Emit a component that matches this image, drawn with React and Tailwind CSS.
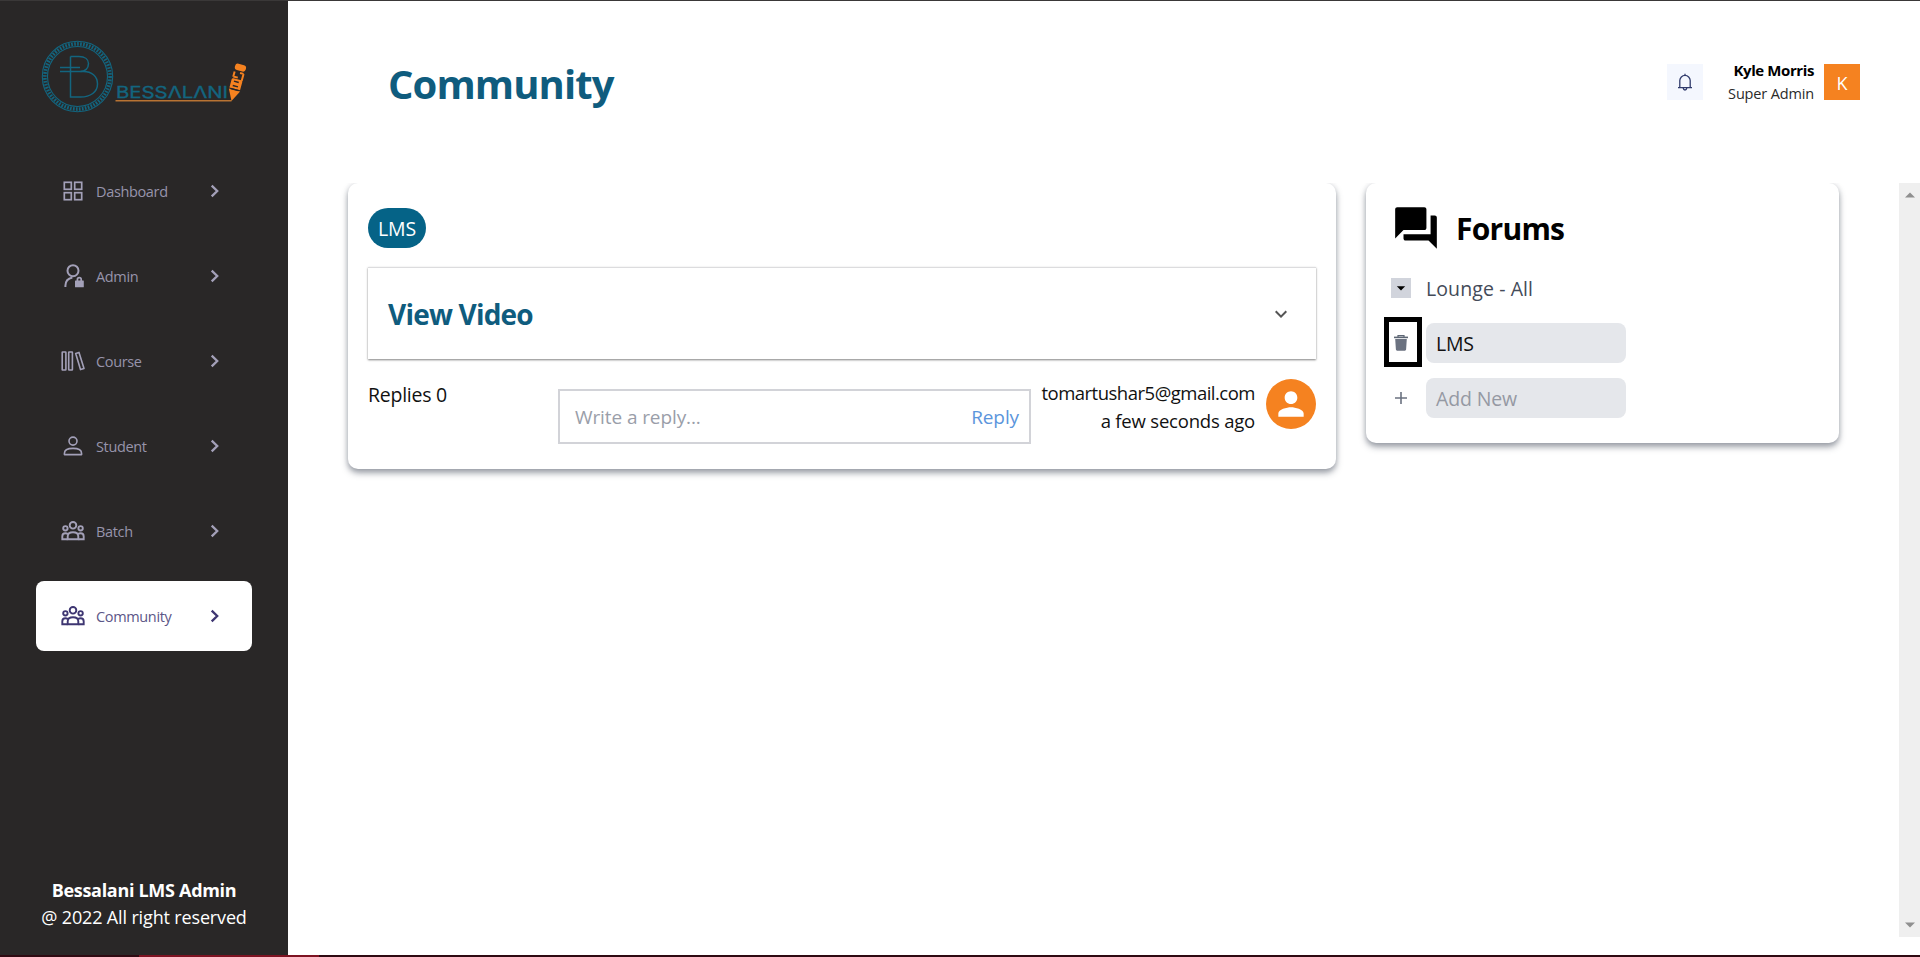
import React from "react";
import { MdForum, MdArrowDropDown, MdExpandMore, MdPerson } from "react-icons/md";

const iconProps = { fill: "none", stroke: "currentColor", strokeWidth: 1.7, width: 24, height: 24, viewBox: "0 0 24 24" };

function GridIcon() {
  return (
    <svg {...iconProps}>
      <rect x="3.300" y="3.300" width="7" height="7" />
      <rect x="13.700" y="3.300" width="7" height="7" />
      <rect x="3.300" y="13.700" width="7" height="7" />
      <rect x="13.700" y="13.700" width="7" height="7" />
    </svg>
  );
}

function AdminIcon() {
  return (
    <svg {...iconProps} strokeWidth="2">
      <circle cx="12" cy="6.700" r="5.500" />
      <path d="M4.400 23v-1.200c0-4.300 2.800-7.600 7-8.400" />
      <path d="M16.400 17v-1.500a1.900 1.900 0 0 1 3.800 0V17" strokeWidth="1.700" />
      <rect x="14" y="16.500" width="8.800" height="6.700" rx=".5" fill="currentColor" stroke="none" />
    </svg>
  );
}

function BooksIcon() {
  return (
    <svg {...iconProps} strokeWidth="1.600">
      <rect x="1.200" y="3" width="3.700" height="18" rx=".4" />
      <rect x="7.700" y="3" width="3.700" height="18" rx=".4" />
      <path d="M14.700 4.400 18 3.400l5 16.100-3.500 1.100z" strokeLinejoin="round" />
    </svg>
  );
}

function StudentIcon() {
  return (
    <svg {...iconProps} strokeWidth="1.600">
      <circle cx="12" cy="7.100" r="4" />
      <path d="M3.400 20.600v-1.200c0-3.200 3.700-5 8.600-5s8.600 1.800 8.600 5v1.200z" strokeLinejoin="round" />
    </svg>
  );
}

function GroupIcon() {
  return (
    <svg {...iconProps} strokeWidth="1.900">
      <circle cx="12" cy="6.300" r="3.300" />
      <circle cx="4.400" cy="9.300" r="2.200" />
      <circle cx="19.600" cy="9.300" r="2.200" />
      <path d="M6.700 20.200v-2.700c0-2.500 1.900-4.200 5.300-4.200s5.300 1.700 5.300 4.200v2.700z" />
      <path d="M6.500 20.200H1.300v-2.700c0-2 1.200-3.200 3.100-3.200 1 0 1.800.2 2.500.7M17.500 20.200h5.200v-2.700c0-2-1.200-3.200-3.100-3.200-1 0-1.800.2-2.500.7" />
    </svg>
  );
}

function Chevron() {
  return (
    <svg width="10" height="14" viewBox="0 0 10 14" fill="none" stroke="currentColor" strokeWidth="2.300">
      <path d="m1.700 1.700 5.500 5.300-5.500 5.300" />
    </svg>
  );
}

function TrashIcon() {
  return (
    <svg width="16" height="18" viewBox="0 0 16 18" fill="none">
      <path d="M5 3V1.600h6V3" stroke="#5d6674" strokeWidth="1.200" />
      <path d="M1 3.400h14" stroke="#5d6674" strokeWidth="1.600" />
      <path d="M2.200 5h11.600l-.7 10.600a1.200 1.200 0 0 1-1.200 1.100H4.100a1.200 1.200 0 0 1-1.200-1.100z" fill="#6b7280" />
    </svg>
  );
}

function PlusIcon() {
  return (
    <svg width="14" height="14" viewBox="0 0 14 14" stroke="#6b7280" strokeWidth="1.600">
      <path d="M7 1v12M1 7h12" />
    </svg>
  );
}

function Logo() {
  return (
    <svg width="208" height="76" viewBox="0 0 208 76" fill="none">
      <g stroke="#13657f">
        <circle cx="36.500" cy="36.500" r="35.200" strokeWidth="1.100" />
        <circle cx="36.500" cy="36.500" r="32.600" strokeWidth="3.600" strokeDasharray="1.700 1.300" />
        <circle cx="36.500" cy="36.500" r="30" strokeWidth="1.100" />
        <g strokeWidth="1.500">
          <path d="M29.500 16.500v40.500h10c10 0 17-5 17-13s-6-12.500-14-12.500H19" />
          <path d="M29.500 16.500h8.500c6 0 9.500 3 9.500 7 0 5-3.500 8-8 8M19 27.500h20" />
        </g>
      </g>
      <text x="75" y="58" fill="#13657f" stroke="#13657f" strokeWidth=".35" fontFamily="Inter, sans-serif" fontSize="16.500" textLength="112" lengthAdjust="spacingAndGlyphs">BESSΛLΛNI</text>
      <path d="M74.500 60.800h116" stroke="#b87333" strokeWidth="1.500" />
      <g transform="translate(190.500 61) rotate(15)">
        <path d="M-5.800-11.500h11.600L0 0z" fill="#f58220" />
        <path d="M-5.500-12.500h11v-8.500q0-1.500-1.500-1.500h-8q-1.500 0-1.500 1.500z" fill="#f58220" />
        <path d="M-2.800-19.800h5M-2.800-15.300h5.400M-4-11.800h8" stroke="#292727" strokeWidth="1.500" />
        <path d="M-4.600-23.800v-5.500M-4.600-24.200H0M4.600-22v-7.300M1-29.300h3.600" stroke="#f58220" strokeWidth="2" />
        <rect x="-5.600" y="-37.800" width="11.200" height="6.500" rx="2.800" fill="#f58220" />
      </g>
    </svg>
  );
}

const navItems = [
  { label: "Dashboard", Icon: GridIcon },
  { label: "Admin", Icon: AdminIcon },
  { label: "Course", Icon: BooksIcon },
  { label: "Student", Icon: StudentIcon },
  { label: "Batch", Icon: GroupIcon },
  { label: "Community", Icon: GroupIcon, active: true },
];

function NavItem({ label, Icon, active }) {
  return (
    <a
      className={
        "flex h-[70px] items-center rounded-lg pl-[25px] pr-8 " +
        (active ? "bg-white text-[#3e3672]" : "text-[#a3a0b8]")
      }
    >
      <Icon />
      <span className={"ml-[11px] flex-1 pt-px text-[14.5px] leading-6 tracking-[-0.35px] " + (active ? "text-[#5c5687]" : "text-[#9794ab]")}>{label}</span>
      <Chevron />
    </a>
  );
}

function Sidebar() {
  return (
    <aside className="flex w-72 shrink-0 flex-col bg-[#292727] px-9">
      <div className="-mx-9 h-[155px] pl-[41px] pt-[39px]">
        <Logo />
      </div>
      <nav className="flex flex-col gap-[15px]">
        {navItems.map((item) => (
          <NavItem key={item.label} {...item} />
        ))}
      </nav>
      <div className="-mx-9 mb-[24px] mt-auto text-center text-[18px] leading-[27px] text-white">
        <p className="font-bold tracking-[-0.3px]">Bessalani LMS Admin</p>
        <p className="tracking-[-0.15px]">@ 2022 All right reserved</p>
      </div>
    </aside>
  );
}

function Header() {
  return (
    <header className="flex h-[182px] shrink-0 items-start justify-between pl-[100px] pr-[60px]">
      <h1 className="mt-[53px] text-[40px] font-bold leading-[60px] tracking-[-0.9px] text-[#0f5c7e]">Community</h1>
      <div className="mt-[63px] flex h-9">
        <div className="flex size-9 items-center justify-center bg-[#f4f7fe] text-[#2f3a6b]">
          <svg width="16" height="18" viewBox="0 0 16 18" fill="none" stroke="currentColor" strokeWidth="1.300">
            <path d="M1 14.700h14M2.800 14.500V7.600a5.200 5.200 0 0 1 10.400 0v6.900M8 2.300V.8M6.200 15.200c.2 1.200.8 1.800 1.800 1.800s1.600-.6 1.800-1.800" />
          </svg>
        </div>
        <div className="-mt-[5px] ml-6 mr-[10px] w-[87px] whitespace-nowrap text-right text-[15px] leading-[23px] text-black">
          <p className="font-bold tracking-[-0.4px]">Kyle Morris</p>
          <p className="text-[14.500px] tracking-[-0.15px] text-[#2a2a2a]">Super Admin</p>
        </div>
        <div className="flex size-9 items-center justify-center bg-[#f58220] pt-0.5 text-[18px] text-white">K</div>
      </div>
    </header>
  );
}

const cardClass = "rounded-[10px] bg-white shadow-[0_4px_6px_rgba(60,68,84,0.5),0_0_5px_rgba(60,68,84,0.12)]";

function PostCard() {
  return (
    <section className={cardClass + " h-[286px] w-[988px] px-5 pt-[25px]"}>
      <span className="flex h-10 w-[58px] items-center justify-center rounded-[20px] bg-[#056387] pt-0.5 text-[19.5px] tracking-[-0.1px] text-white">LMS</span>
      <div className="mt-[19px] flex h-[92px] items-center justify-between border-t border-[#dcdcde] bg-white pl-[20px] pr-[23px] shadow-[0_1px_2px_rgba(0,0,0,0.5)]">
        <h2 className="text-[28px] font-bold tracking-[-0.8px] text-[#0f5c7e]">View Video</h2>
        <MdExpandMore className="size-6 text-[#555]" />
      </div>
      <div className="flex">
        <p className="mt-[22px] w-[190px] text-[19.5px] leading-[28px] tracking-[-0.25px] text-[#111]">Replies 0</p>
        <div className="mt-[30px] flex h-[55px] w-[473px] shrink-0 items-center justify-between border-2 border-[#d2d3d8] pl-[15px] pr-[10px] pt-[2px] text-[19px]">
          <span className="tracking-[-0.1px] text-[#9a9ea9]">Write a reply...</span>
          <span className="tracking-[-0.1px] text-[#5b95dc]">Reply</span>
        </div>
        <div className="mt-5 w-[224px] whitespace-nowrap text-right text-[18.5px] leading-[28px] text-[#111]">
          <p className="tracking-[-0.5px]">tomartushar5@gmail.com</p>
          <p className="tracking-[-0.2px]">a few seconds ago</p>
        </div>
        <div className="ml-[11px] mt-5 flex size-[50px] shrink-0 items-center justify-center rounded-full bg-[#f58220] text-white">
          <MdPerson className="size-[38px]" />
        </div>
      </div>
    </section>
  );
}

function ForumsCard() {
  return (
    <section className={cardClass + " h-[260px] w-[473px] pl-[18px] pt-5"}>
      <div className="flex h-[50px] items-center pl-[7px] text-black">
        <MdForum className="size-[50px]" />
        <h2 className="ml-[15px] pt-px text-[30px] font-bold tracking-[-0.75px]">Forums</h2>
      </div>
      <div className="mt-[20px] flex h-[30px] items-center">
        <div className="ml-[7px] flex size-5 items-center justify-center bg-[#d1d4dc] text-black">
          <MdArrowDropDown className="size-5" />
        </div>
        <span className="ml-[15px] pt-0.5 text-[19.500px] tracking-[0.1px] text-[#444b59]">Lounge - All</span>
      </div>
      <div className="mt-[14px] flex h-[50px] items-center">
        <div className="flex h-[50px] w-[38px] items-center justify-center border-[5px] border-black pr-[4px] pt-0.5">
          <TrashIcon />
        </div>
        <div className="ml-1 mt-0.5 flex h-10 w-[200px] items-center rounded-lg bg-[#e5e7eb] px-[10px] pt-0.5 text-[19.500px] tracking-[-0.2px] text-[#111]">LMS</div>
      </div>
      <div className="mt-[11px] flex h-10 items-center">
        <div className="flex w-[38px] justify-center pr-[4px]">
          <PlusIcon />
        </div>
        <div className="ml-1 flex h-10 w-[200px] items-center rounded-lg bg-[#e5e7eb] px-[10px] pt-0.5 text-[19.500px] tracking-[-0.15px] text-[#9599a3]">Add New</div>
      </div>
    </section>
  );
}

function Scrollbar() {
  return (
    <div className="flex h-[754px] w-[21px] flex-col items-center justify-between bg-[#efefef] py-[9px] text-[#8f8f8f]">
      <svg width="10" height="6" viewBox="0 0 10 6" fill="currentColor"><path d="M5 .5 10 5.500H0z" /></svg>
      <svg width="10" height="6" viewBox="0 0 10 6" fill="currentColor"><path d="M5 5.500 10 .5H0z" /></svg>
    </div>
  );
}

export default function App() {
  return (
    <div className="flex h-[957px] w-[1920px] flex-col overflow-hidden bg-white font-['Open_Sans','Noto_Sans',sans-serif]">
      <div className="h-px shrink-0 bg-[#3a3838]" />
      <div className="flex min-h-0 flex-1">
        <Sidebar />
        <main className="flex min-w-0 flex-1 flex-col">
          <Header />
          <div className="flex min-h-0 flex-1 items-start justify-between overflow-hidden pl-[60px]">
            <div className="flex items-start gap-[30px]">
              <PostCard />
              <ForumsCard />
            </div>
            <Scrollbar />
          </div>
        </main>
      </div>
      <div className="flex h-0.5 shrink-0 bg-[#2f0a12]">
        <div className="ml-[139px] w-[180px] bg-[#7d1322]" />
      </div>
    </div>
  );
}
